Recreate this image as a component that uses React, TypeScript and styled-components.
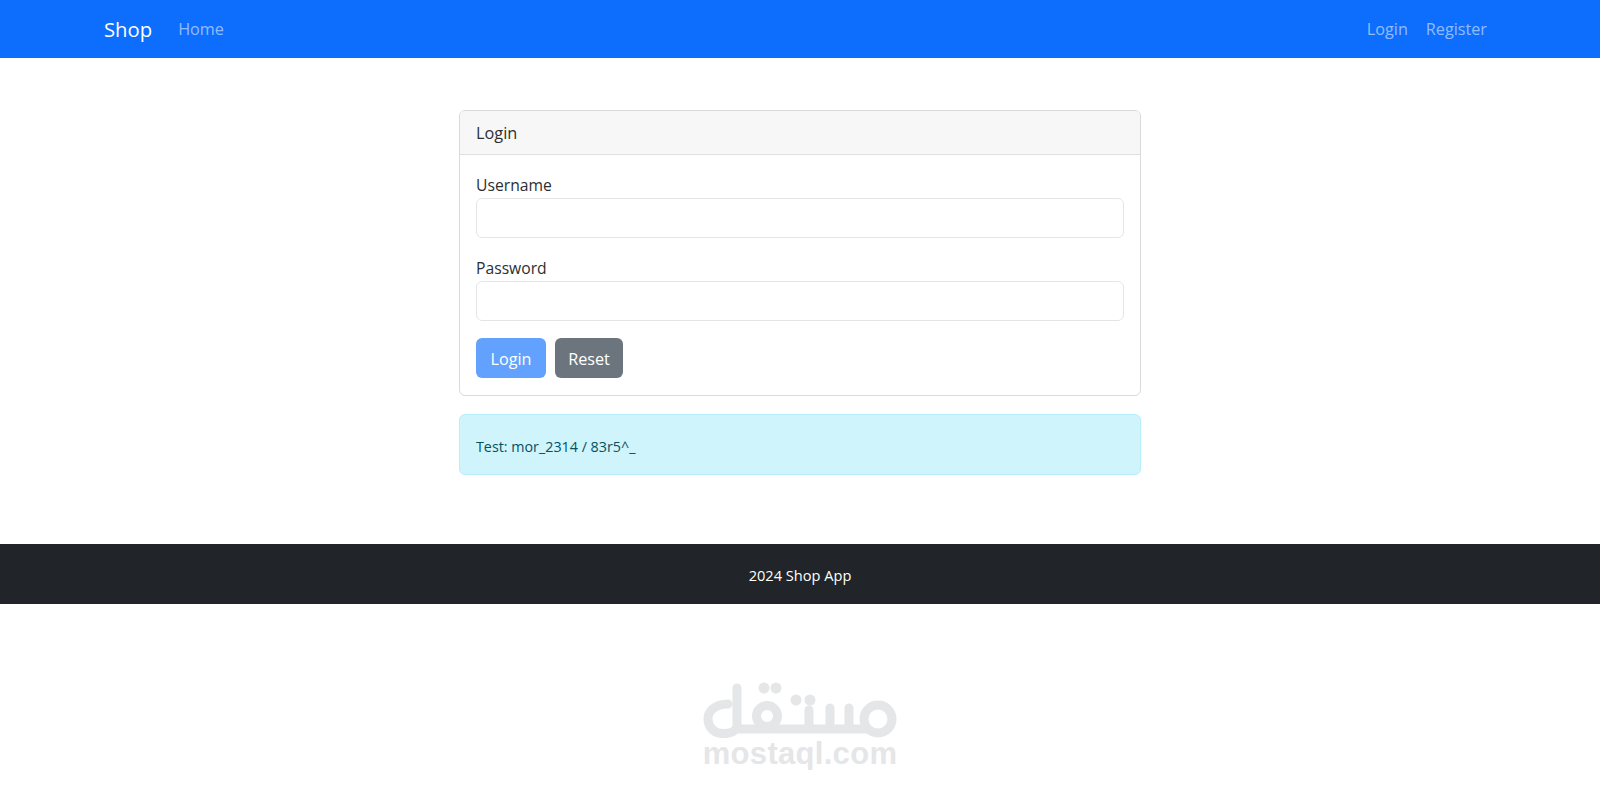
import React from 'react';
import styled, { createGlobalStyle } from 'styled-components';

const GlobalStyle = createGlobalStyle`
  * {
    box-sizing: border-box;
  }

  body {
    margin: 0;
    background: #fff;
    color: #2b2f33;
    font-family: 'Open Sans', 'Noto Sans', sans-serif;
    font-size: 15px;
  }
`;

const Navbar = styled.nav`
  display: flex;
  align-items: center;
  justify-content: space-between;
  height: 58px;
  padding: 0 105px 0 104px;
  background: #0d6efd;
`;

const NavGroup = styled.div`
  display: flex;
  align-items: center;
  gap: 2px;
`;

const Brand = styled.a`
  margin-right: 16px;
  color: #fff;
  font-size: 20.3px;
  text-decoration: none;
`;

const NavLink = styled.a`
  padding: 8px;
  color: rgba(255, 255, 255, 0.55);
  font-size: 16.2px;
  text-decoration: none;
`;

const Main = styled.main`
  width: 682px;
  margin: 0 auto;
  padding: 52px 0 69px;
`;

const Card = styled.section`
  border: 1px solid #d9dadb;
  border-radius: 6px;
  overflow: hidden;
`;

const CardHeader = styled.header`
  display: flex;
  align-items: center;
  height: 44px;
  padding: 0 16px;
  border-bottom: 1px solid #dfdfdf;
  background: #f7f7f7;
  font-size: 16.3px;
`;

const CardBody = styled.form`
  display: flex;
  flex-direction: column;
  padding: 17px 16px 17px;
`;

const Field = styled.div`
  display: flex;
  flex-direction: column;
  margin-bottom: 17px;
`;

const Label = styled.label`
  height: 26px;
  line-height: 27px;
  font-size: 15.7px;
`;

const Input = styled.input`
  height: 40px;
  border: 1px solid #e2e5e8;
  border-radius: 6px;
  background: #fff;
`;

const Actions = styled.div`
  display: flex;
  gap: 9px;
`;

const Button = styled.button<{ $tone: 'primary' | 'secondary' }>`
  width: ${(p) => (p.$tone === 'primary' ? '70px' : '68px')};
  height: 40px;
  padding: 2px 0 0;
  border: 0;
  border-radius: 6px;
  background: ${(p) => (p.$tone === 'primary' ? '#62a1fd' : '#6c757d')};
  color: #fff;
  font-family: inherit;
  font-size: 16.2px;
`;

const Alert = styled.div`
  display: flex;
  align-items: center;
  height: 61px;
  margin-top: 18px;
  padding: 4px 16px 0;
  border: 1px solid #b6effb;
  border-radius: 6px;
  background: #cff4fc;
  color: #055160;
  font-size: 14.3px;
`;

const Footer = styled.footer`
  display: flex;
  align-items: center;
  justify-content: center;
  height: 60px;
  padding-top: 1px;
  background: #212529;
  color: #fff;
  font-size: 14.6px;
`;

const Watermark = styled.div`
  display: flex;
  flex-direction: column;
  align-items: center;
  padding-top: 78px;
`;

const WatermarkText = styled.div`
  margin-top: -2px;
  color: #e5e6e7;
  font-family: 'Liberation Sans', Arial, sans-serif;
  font-size: 31px;
  font-weight: 700;
  letter-spacing: 0.3px;
  line-height: 32px;
`;

// mostaql logo, stroked so the round ends match
const MostaqlLogo = () => (
  <svg width="196" height="58" viewBox="701 682 196 58" fill="none" stroke="#e5e6e7" strokeWidth="9" strokeLinecap="round" aria-hidden="true">
    <path d="M727 704 C713 704 707 712 707 719 C707 727 713 733.5 722 733.5 C730 733.5 736 731 736 725 L736 688" />
    <path d="M736 729 L866 729" />
    <circle cx="766" cy="716" r="10.5" />
    <path d="M808 710 L808 728 M829 708 L829 728 M848 708 L848 728" />
    <circle cx="877" cy="719" r="14" />
    <g fill="#e5e6e7" stroke="none">
      <circle cx="763" cy="688" r="5.5" />
      <circle cx="775" cy="688" r="5.5" />
      <circle cx="795" cy="700" r="5.5" />
      <circle cx="809" cy="700" r="5.5" />
    </g>
  </svg>
);

const App: React.FC = () => {
  return (
    <>
      <GlobalStyle />
      <Navbar>
        <NavGroup>
          <Brand href="#">Shop</Brand>
          <NavLink href="#">Home</NavLink>
        </NavGroup>
        <NavGroup>
          <NavLink href="#">Login</NavLink>
          <NavLink href="#">Register</NavLink>
        </NavGroup>
      </Navbar>
      <Main>
        <Card>
          <CardHeader>Login</CardHeader>
          <CardBody>
            <Field>
              <Label htmlFor="username">Username</Label>
              <Input id="username" type="text" />
            </Field>
            <Field>
              <Label htmlFor="password">Password</Label>
              <Input id="password" type="password" />
            </Field>
            <Actions>
              <Button type="button" $tone="primary">Login</Button>
              <Button type="reset" $tone="secondary">Reset</Button>
            </Actions>
          </CardBody>
        </Card>
        <Alert>Test: mor_2314 / 83r5^_</Alert>
      </Main>
      <Footer>2024 Shop App</Footer>
      <Watermark>
        <MostaqlLogo />
        <WatermarkText>mostaql.com</WatermarkText>
      </Watermark>
    </>
  );
};

export default App;
